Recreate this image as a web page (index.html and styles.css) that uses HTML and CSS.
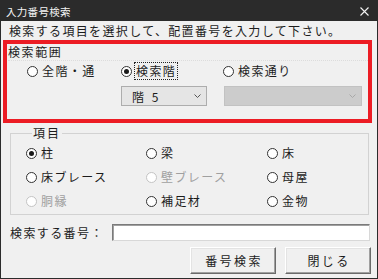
FILE: index.html
```html
<!DOCTYPE html>
<html lang="ja">
<head>
<meta charset="utf-8">
<link rel="stylesheet" href="styles.css">
</head>
<body>
<div class="window">
  <div class="titlebar">
    <span class="title">入力番号検索</span>
    <svg class="close" width="9" height="9" viewBox="0 0 9 9"><path d="M0.5 0.5L8.5 8.5M8.5 0.5L0.5 8.5" stroke="#f2f2f2" stroke-width="1.1" fill="none"/></svg>
  </div>
  <div class="content">
    <div class="instruction">検索する項目を選択して、配置番号を入力して下さい。</div>
    <div class="scope">
      <div class="scope-label">検索範囲</div>
      <div class="scope-radios">
        <label class="opt w94"><span class="radio"></span><span class="txt">全階・通</span></label>
        <label class="opt w102"><span class="radio checked"></span><span class="txt focus">検索階</span></label>
        <label class="opt"><span class="radio"></span><span class="txt">検索通り</span></label>
      </div>
      <div class="combos">
        <div class="combo"><span class="combo-text">階 5</span><svg width="7" height="4" viewBox="0 0 7 4"><path d="M0.5 0.5L3.5 3.5L6.5 0.5" stroke="#555" fill="none"/></svg></div>
        <div class="combo disabled"><span class="combo-text"></span><svg width="7" height="4" viewBox="0 0 7 4"><path d="M0.5 0.5L3.5 3.5L6.5 0.5" stroke="#a8a8a8" fill="none"/></svg></div>
      </div>
    </div>
    <fieldset class="group">
      <legend>項目</legend>
      <div class="grid">
        <label class="opt"><span class="radio checked"></span><span class="txt">柱</span></label>
        <label class="opt"><span class="radio"></span><span class="txt">梁</span></label>
        <label class="opt"><span class="radio"></span><span class="txt">床</span></label>
        <label class="opt"><span class="radio"></span><span class="txt">床ブレース</span></label>
        <label class="opt off"><span class="radio"></span><span class="txt">壁ブレース</span></label>
        <label class="opt"><span class="radio"></span><span class="txt">母屋</span></label>
        <label class="opt off"><span class="radio"></span><span class="txt">胴縁</span></label>
        <label class="opt"><span class="radio"></span><span class="txt">補足材</span></label>
        <label class="opt"><span class="radio"></span><span class="txt">金物</span></label>
      </div>
    </fieldset>
    <div class="search-row">
      <span class="search-label">検索する番号：</span>
      <div class="input"></div>
    </div>
    <div class="buttons">
      <div class="btn">番号検索</div>
      <div class="btn">閉じる</div>
    </div>
  </div>
</div>
</body>
</html>
```
FILE: styles.css
```css
html, body {
  margin: 0;
  padding: 0;
}
body {
  font-family: "Noto Sans CJK JP", "Noto Sans", sans-serif;
  font-size: 12px;
  color: #1c1c1c;
  background: #f0f0f0;
}
.window {
  width: 378px;
  height: 279px;
  box-sizing: border-box;
  border: 1px solid #2b2b2b;
  background: #f0f0f0;
  display: flex;
  flex-direction: column;
  overflow: hidden;
}
.titlebar {
  flex: none;
  height: 20px;
  background: #2b2b2b;
  color: #f4f4f4;
  display: flex;
  align-items: center;
  justify-content: space-between;
  padding: 0 8px 0 5px;
  font-size: 10.5px;
  letter-spacing: 0.3px;
}
.close {
  display: block;
  margin-top: 1px;
}
.content {
  flex: 1;
  display: flex;
  flex-direction: column;
}
.instruction {
  margin: 2px 0 0 8px;
  line-height: 16px;
  letter-spacing: 1.35px;
}
.scope {
  margin: 1px 5px 0 2px;
  border: 4px solid #ec1c24;
  height: 75px;
  display: flex;
  flex-direction: column;
}
.scope-label {
  margin: 0 0 0 1px;
  line-height: 16px;
  letter-spacing: 1.6px;
  border-bottom: 1px dotted #dcdcdc;
}
.scope-radios {
  display: flex;
  margin-top: 2px;
  padding-left: 20px;
  height: 16px;
}
.opt {
  display: flex;
  align-items: center;
  height: 16px;
  line-height: 16px;
  letter-spacing: 1.4px;
  white-space: nowrap;
}
.w94 { width: 94px; }
.w102 { width: 102px; }
.radio {
  flex: none;
  width: 11px;
  height: 11px;
  box-sizing: border-box;
  border: 1px solid #333;
  border-radius: 50%;
  background: #fff;
  margin-right: 4px;
  display: flex;
  align-items: center;
  justify-content: center;
}
.radio.checked::after {
  content: "";
  width: 5px;
  height: 5px;
  border-radius: 50%;
  background: #1a1a1a;
}
.txt.focus {
  outline: 1px dotted #222;
  outline-offset: 0;
  padding: 0 1px;
  margin-left: -1px;
}
.opt.off .radio {
  border-color: #c4c4c4;
}
.opt.off .txt {
  color: #a0a0a0;
}
.combos {
  display: flex;
  gap: 17px;
  margin-top: 7px;
  padding-left: 114px;
}
.combo {
  height: 20px;
  width: 86px;
  box-sizing: border-box;
  border: 1px solid #adadad;
  background: #e5e5e5;
  display: flex;
  align-items: center;
  justify-content: space-between;
  padding: 0 5px 0 10px;
  letter-spacing: 1px;
}
.combo-text {
  word-spacing: 3px;
}
.combo.disabled {
  width: 138px;
  background: #cccccc;
  border-color: #c2c2c2;
}
.group {
  margin: 2px 8px 0 9px;
  padding: 0 0 1px 15px;
  border: 1px solid #d2d2d2;
  min-width: 0;
}
.group legend {
  margin-left: 6px;
  padding: 0 1px;
  line-height: 16px;
  letter-spacing: 2px;
}
.grid {
  display: grid;
  grid-template-columns: 120px 121px 1fr;
  grid-auto-rows: 24px;
  align-items: center;
}
.search-row {
  display: flex;
  align-items: center;
  margin-top: 9px;
  padding-left: 9px;
  height: 17px;
}
.search-label {
  width: 102px;
  letter-spacing: 1.4px;
  line-height: 16px;
}
.input {
  width: 258px;
  height: 17px;
  box-sizing: border-box;
  background: #fff;
  border: 1px solid;
  border-color: #7a7a7a #d8d8d8 #d8d8d8 #7a7a7a;
  box-shadow: inset 1px 1px 0 #a0a0a0;
}
.buttons {
  display: flex;
  justify-content: flex-end;
  gap: 9px;
  margin: 6px 6px 0 0;
}
.btn {
  width: 86px;
  height: 27px;
  box-sizing: border-box;
  display: flex;
  align-items: center;
  justify-content: center;
  background: #f0f0f0;
  border: 1px solid;
  border-color: #ffffff #6b6b6b #6b6b6b #ffffff;
  box-shadow: inset -1px -1px 0 #a0a0a0, inset 1px 1px 0 #e3e3e3;
  letter-spacing: 2.4px;
  padding-left: 2px;
}
```
